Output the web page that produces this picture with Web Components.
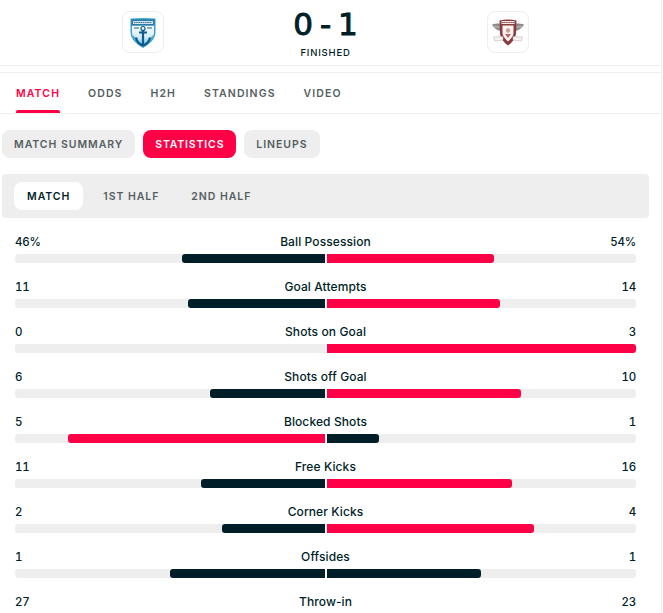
<!DOCTYPE html>
<html>
<head>
<meta charset="utf-8">
<title>Match statistics</title>
<style>
  html, body { margin: 0; background: #fff; }
  body {
    font-family: Inter, "Liberation Sans", sans-serif;
    overflow: hidden;
    box-sizing: border-box;
    width: 662px;
    height: 613px;
    border-right: 1px solid #eeeeee;
  }
</style>
</head>
<body>
<match-header></match-header>
<tab-bar></tab-bar>
<pill-row></pill-row>
<period-tabs></period-tabs>
<stats-list></stats-list>

<script>
class TeamLogo extends HTMLElement {
  constructor() {
    super();
    this.shadow = this.attachShadow({ mode: 'open' });
  }

  connectedCallback() {
    const anchor = /*html*/`
      <svg width="26" height="31" viewBox="0 0 26 31">
        <defs>
          <linearGradient id="sky" x1="0" y1="0" x2="0" y2="1">
            <stop offset="0" stop-color="#fbfdfe"/>
            <stop offset=".55" stop-color="#d5ecf6"/>
            <stop offset="1" stop-color="#62b8de"/>
          </linearGradient>
        </defs>
        <path d="M.5 1.500Q13 .5 25.500 1.500V15C25.500 23 19 27 13 31 7 27 .5 23 .5 15z" fill="#3f9fcf"/>
        <path d="M2 8.500H24V15C24 22 18.500 26 13 29.500 7.500 26 2 22 2 15z" fill="url(#sky)"/>
        <rect x="1.500" y="2.500" width="23" height="6" fill="#2a7ba8"/>
        <rect x="3" y="4" width="20" height="3" fill="#cfe2ec"/>
        <path d="M4 5.500H22" stroke="#3b7393" stroke-width="1" stroke-dasharray="1.500 .7"/>
        <rect x="4" y="10" width="5" height="2" fill="#7fb0c9"/>
        <rect x="17" y="10" width="5" height="2" fill="#7fb0c9"/>
        <path d="M2.500 18C5 20 6 21 8 24.500L13 29.500 18 24.500C20 21 21 20 23.500 18 22.500 23.500 18 27 13 29.500 8 27 3.500 23.500 2.500 18z" fill="#4aa8d4"/>
        <path d="M13 13V28.500M9 15.500H17M6 20.500C7 25 10 27.500 13 28.500 16 27.500 19 25 20 20.500" fill="none" stroke="#0d5c8a" stroke-width="2.200"/>
        <circle cx="13" cy="11.500" r="2" fill="none" stroke="#0d5c8a" stroke-width="1.200"/>
      </svg>`;
    const wings = /*html*/`
      <svg width="32" height="28" viewBox="0 0 32 28">
        <path d="M0 6.500C4 5 8 5 10 6.500V13C6 13 2 10.500 0 6.500zM32 6.500C28 5 24 5 22 6.500V13C26 13 30 10.500 32 6.500z" fill="#8f8a8a"/>
        <path d="M2 8.500C5 9 8 9 10 9M30 8.500C27 9 24 9 22 9" stroke="#d6d2d2" stroke-width=".8" fill="none"/>
        <path d="M7.500 2.500Q16 .5 24.500 2.500L24 16C23 21 20 24.500 16 27.500 12 24.500 9 21 8 16z" fill="#8a3b3f"/>
        <rect x="9.500" y="3" width="13" height="3" fill="#f4ebe6"/>
        <path d="M10 4.500H22" stroke="#7c2b30" stroke-width=".9" stroke-dasharray="1.500 .6"/>
        <path d="M10.500 7.500H21.500V16C20.500 19.500 18 21.500 16 23.500 14 21.500 11.500 19.500 10.500 16z" fill="#f8f3f0"/>
        <circle cx="16" cy="12.500" r="2.200" fill="#cf9a9b"/>
        <path d="M13 16H19L16 20z" fill="#b0666a"/>
        <path d="M1.500 19L11 18.500V22L3 23zM30.500 19L21 18.500V22L29 23z" fill="#f6f3f1" stroke="#b3a8a4" stroke-width=".5"/>
      </svg>`;
    this.shadow.innerHTML = /*html*/`
      <style>
        :host {
          display: flex;
          align-items: center;
          justify-content: center;
          box-sizing: border-box;
          width: 42px;
          height: 42px;
          background: #fff;
          border: 1px solid #eeeeee;
          border-radius: 8px;
        }
        svg { display: block; }
      </style>
      ${this.getAttribute('team') === 'home' ? anchor : wings}`;
  }
}
customElements.define('team-logo', TeamLogo);

class MatchHeader extends HTMLElement {
  constructor() {
    super();
    this.shadow = this.attachShadow({ mode: 'open' });
  }

  connectedCallback() {
    this.shadow.innerHTML = /*html*/`
      <style>
        :host {
          display: flex;
          justify-content: space-between;
          align-items: flex-start;
          box-sizing: border-box;
          height: 66px;
          padding: 11px 132px 0 122px;
          border-bottom: 1px solid #eeeeee;
          color: #001e28;
        }
        .center { display: flex; flex-direction: column; align-items: center; }
        .score {
          display: flex;
          gap: 7px;
          font-family: "DejaVu Sans", sans-serif;
          font-size: 31px;
          line-height: 26px;
          font-weight: 400;
          -webkit-text-stroke: 1px #001e28;
          height: 26px;
        }
        .status {
          font-size: 9.5px;
          line-height: 12px;
          font-weight: 500;
          letter-spacing: .8px;
          margin-top: 10px;
        }
      </style>
      <team-logo team="home"></team-logo>
      <div class="center">
        <div class="score"><span>0</span><span>-</span><span>1</span></div>
        <div class="status">FINISHED</div>
      </div>
      <team-logo team="away"></team-logo>`;
  }
}
customElements.define('match-header', MatchHeader);

class TabBar extends HTMLElement {
  constructor() {
    super();
    this.shadow = this.attachShadow({ mode: 'open' });
  }

  connectedCallback() {
    const tabs = ['MATCH', 'ODDS', 'H2H', 'STANDINGS', 'VIDEO'];
    this.shadow.innerHTML = /*html*/`
      <style>
        :host {
          display: flex;
          gap: 28px;
          box-sizing: border-box;
          height: 42px;
          margin-top: 6px;
          padding: 0 16px;
          border-top: 1px solid #eeeeee;
          border-bottom: 1px solid #eeeeee;
        }
        .tab {
          font-size: 10.5px;
          line-height: 14px;
          font-weight: 600;
          letter-spacing: 1.1px;
          color: #555e61;
          padding-top: 14px;
          position: relative;
        }
        .tab.on { color: #ff0046; }
        .tab.on::after {
          content: '';
          position: absolute;
          left: 0; right: 0; bottom: 0;
          height: 3px;
          background: #ff0046;
          border-radius: 2px 2px 0 0;
        }
      </style>
      ${tabs.map((t, i) => `<div class="tab ${i === 0 ? 'on' : ''}">${t}</div>`).join('')}`;
  }
}
customElements.define('tab-bar', TabBar);

class PillRow extends HTMLElement {
  constructor() {
    super();
    this.shadow = this.attachShadow({ mode: 'open' });
  }

  connectedCallback() {
    this.shadow.innerHTML = /*html*/`
      <style>
        :host {
          display: flex;
          gap: 8px;
          padding: 16px 2px 0;
        }
        .pill {
          height: 28px;
          line-height: 30px;
          padding: 0 12px;
          border-radius: 8px;
          background: #eeeeee;
          color: #555e61;
          font-size: 10.5px;
          font-weight: 600;
          letter-spacing: .95px;
        }
        .pill.on { background: #ff0046; color: #fff; letter-spacing: .85px; }
      </style>
      <div class="pill">MATCH SUMMARY</div>
      <div class="pill on">STATISTICS</div>
      <div class="pill">LINEUPS</div>`;
  }
}
customElements.define('pill-row', PillRow);

class PeriodTabs extends HTMLElement {
  constructor() {
    super();
    this.shadow = this.attachShadow({ mode: 'open' });
  }

  connectedCallback() {
    this.shadow.innerHTML = /*html*/`
      <style>
        :host {
          display: flex;
          gap: 8px;
          box-sizing: border-box;
          height: 44px;
          margin: 16px 12px 0 2px;
          padding: 8px 12px;
          background: #eeeeee;
          border-radius: 4px;
        }
        .item {
          height: 28px;
          line-height: 30px;
          padding: 0 12px;
          border-radius: 8px;
          color: #555e61;
          font-size: 10.5px;
          font-weight: 600;
          letter-spacing: .95px;
        }
        .item.on { background: #fff; color: #001e28; padding: 0 13px; }
      </style>
      <div class="item on">MATCH</div>
      <div class="item">1ST HALF</div>
      <div class="item">2ND HALF</div>`;
  }
}
customElements.define('period-tabs', PeriodTabs);

class StatRow extends HTMLElement {
  constructor() {
    super();
    this.shadow = this.attachShadow({ mode: 'open' });
  }

  connectedCallback() {
    const home = this.getAttribute('home');
    const away = this.getAttribute('away');
    const a = parseFloat(home);
    const b = parseFloat(away);
    // the site floors the home share, the away bar takes the rest
    const homeShare = Math.floor(a / (a + b) * 100);
    const awayShare = 100 - homeShare;
    const colour = (mine, other) => (mine > other ? '#ff0046' : '#001e28');
    this.shadow.innerHTML = /*html*/`
      <style>
        :host { display: block; height: 45px; }
        .top {
          display: grid;
          grid-template-columns: 1fr auto 1fr;
          align-items: center;
          height: 15px;
          font-size: 12px;
          font-weight: 500;
          color: #001e28;
        }
        .value {
          font-size: 11.5px;
          letter-spacing: -.2px;
          font-variant-numeric: tabular-nums;
        }
        .value.right { text-align: right; }
        .label { letter-spacing: .1px; }
        .bars {
          display: flex;
          gap: 2px;
          height: 9px;
          margin-top: 5px;
        }
        .track {
          flex: 1;
          display: flex;
          background: #eeeeee;
        }
        .track.home { justify-content: flex-end; border-radius: 3px 0 0 3px; }
        .track.away { border-radius: 0 3px 3px 0; }
        .home .fill { border-radius: 3px 0 0 3px; }
        .away .fill { border-radius: 0 3px 3px 0; }
      </style>
      <div class="top">
        <span class="value">${home}</span>
        <span class="label"><slot></slot></span>
        <span class="value right">${away}</span>
      </div>
      <div class="bars">
        <div class="track home"><div class="fill" style="width:${homeShare}%;background:${colour(a, b)}"></div></div>
        <div class="track away"><div class="fill" style="width:${awayShare}%;background:${colour(b, a)}"></div></div>
      </div>`;
  }
}
customElements.define('stat-row', StatRow);

class StatsList extends HTMLElement {
  constructor() {
    super();
    this.shadow = this.attachShadow({ mode: 'open' });
  }

  connectedCallback() {
    const stats = [
      ['46%', 'Ball Possession', '54%'],
      ['11', 'Goal Attempts', '14'],
      ['0', 'Shots on Goal', '3'],
      ['6', 'Shots off Goal', '10'],
      ['5', 'Blocked Shots', '1'],
      ['11', 'Free Kicks', '16'],
      ['2', 'Corner Kicks', '4'],
      ['1', 'Offsides', '1'],
      ['27', 'Throw-in', '23'],
    ];
    this.shadow.innerHTML = /*html*/`
      <style>
        :host {
          display: block;
          margin-top: 16px;
          padding: 0 25px 0 15px;
        }
      </style>
      ${stats.map(s => `<stat-row home="${s[0]}" away="${s[2]}">${s[1]}</stat-row>`).join('')}`;
  }
}
customElements.define('stats-list', StatsList);
</script>
</body>
</html>
